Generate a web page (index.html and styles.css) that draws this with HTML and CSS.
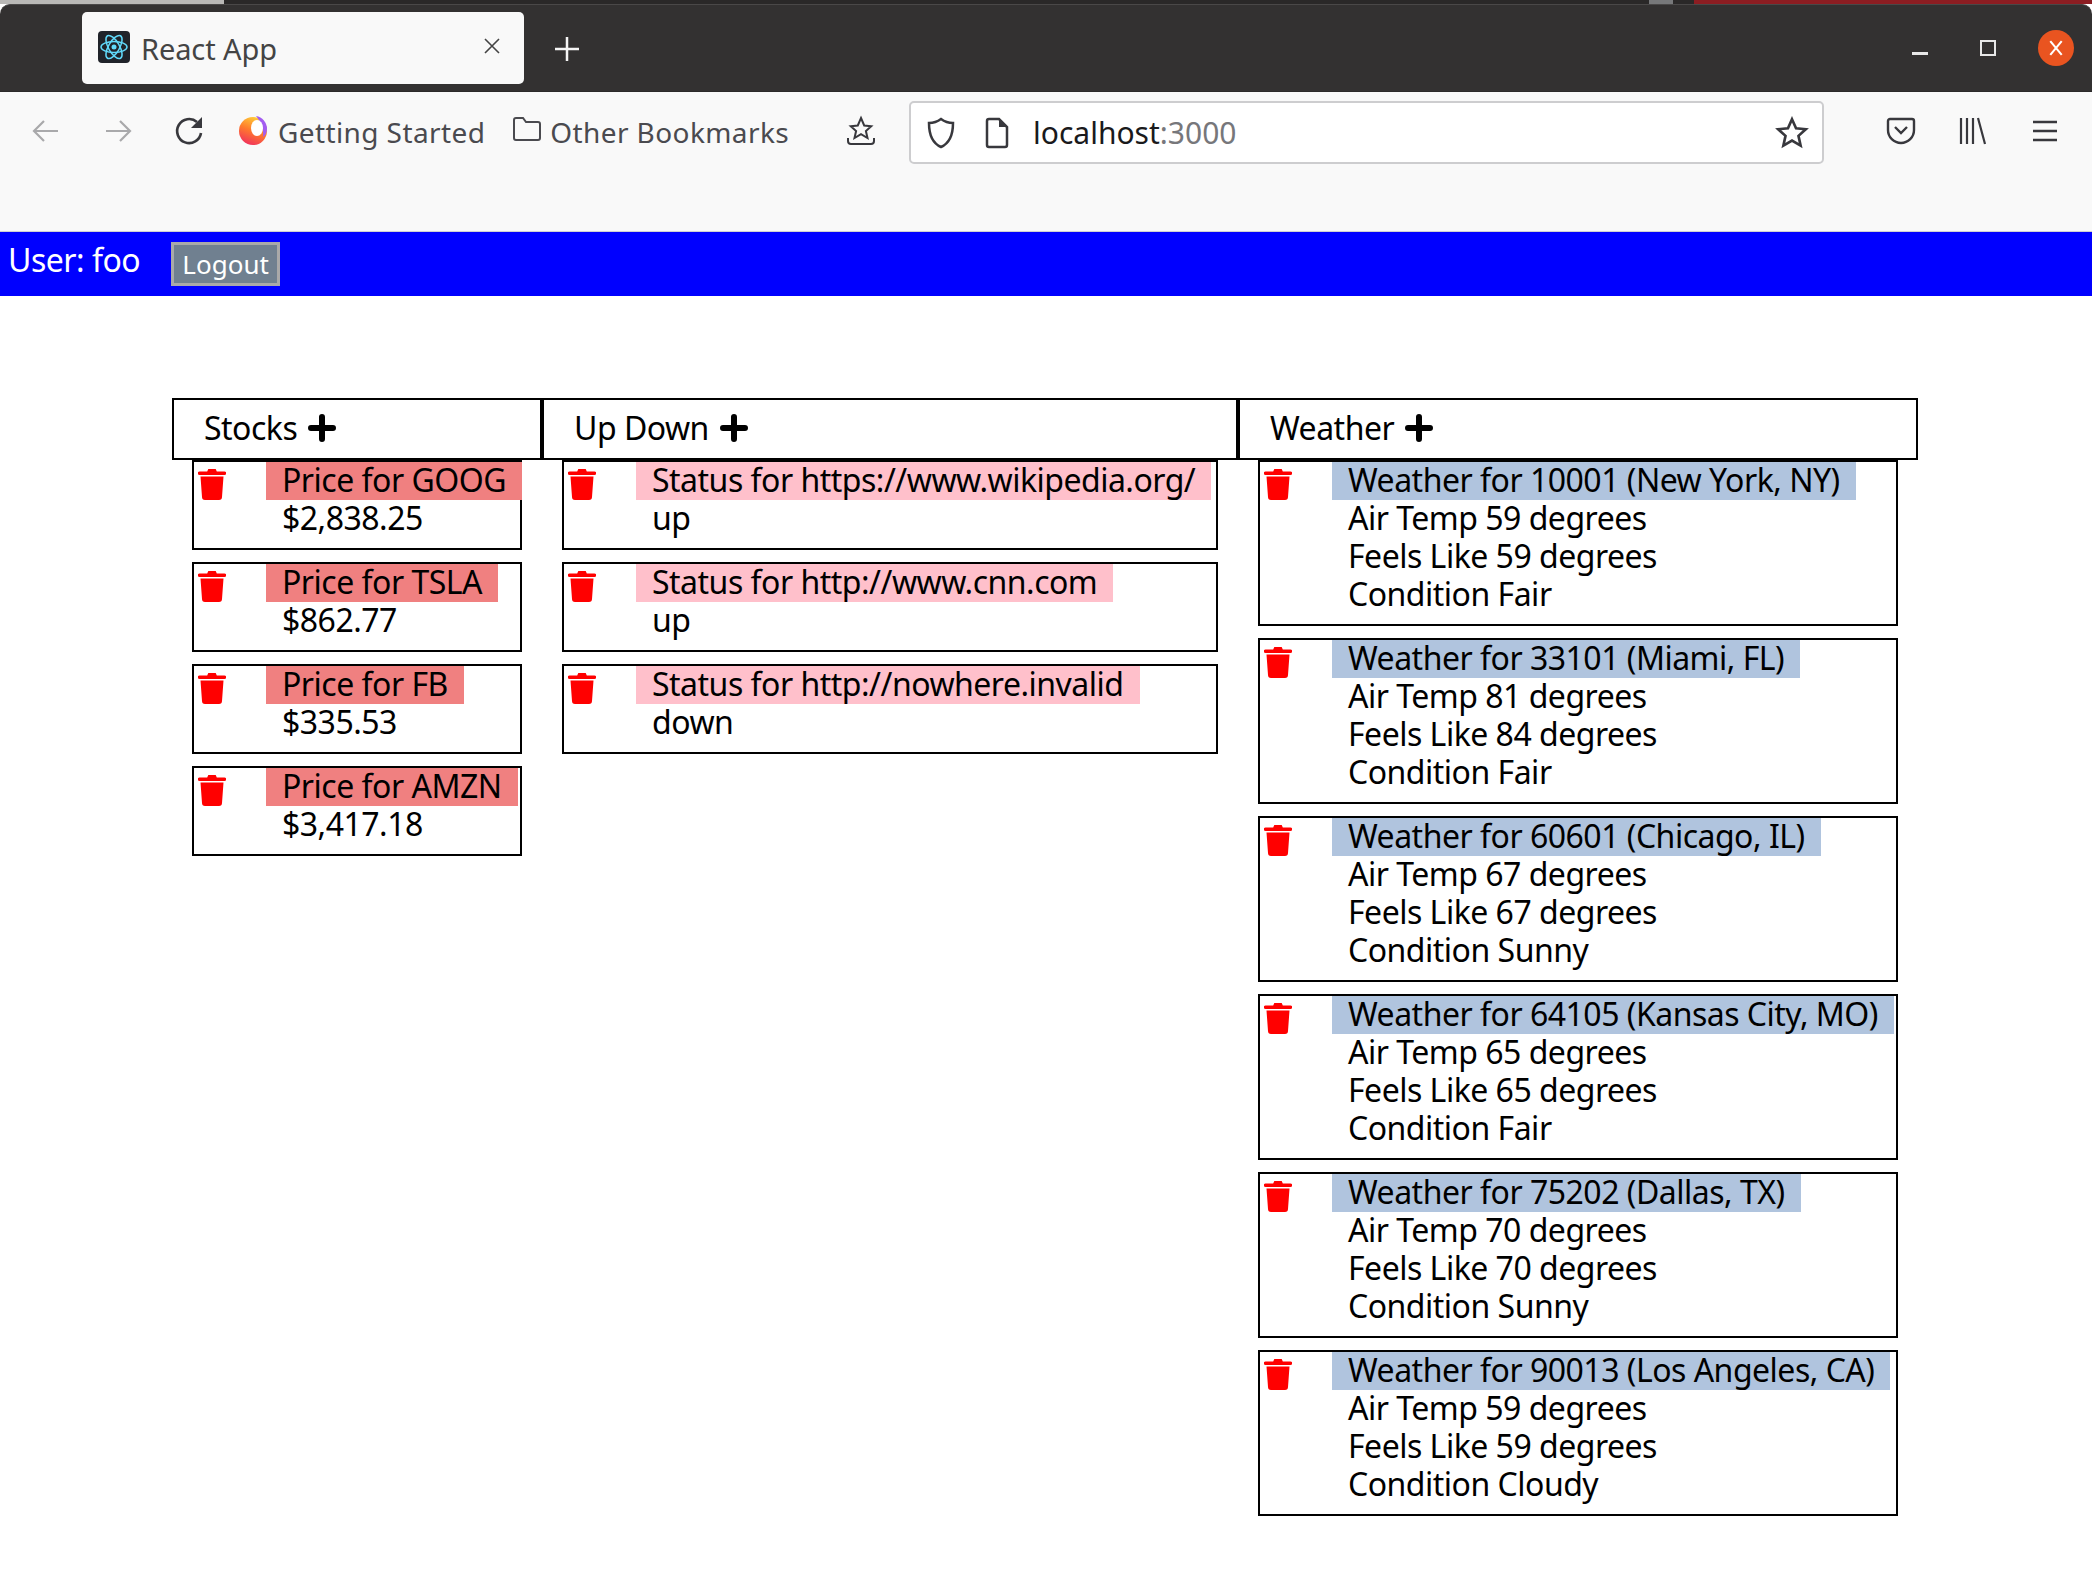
FILE: index.html
```html
<!DOCTYPE html>
<html lang="en">
<head>
  <meta charset="UTF-8">
  <title>React App</title>
  <link rel="stylesheet" href="styles.css">
</head>
<body>
  <svg class="defs" width="0" height="0">
    <symbol id="trash" viewBox="0 0 28 32">
      <path d="M1.500 3.500h7.700L10.300 1h7.400l1.100 2.500h7.700a1.500 1.500 0 0 1 0 3.500h-25a1.500 1.500 0 0 1 0-3.500zM2.500 8.500h23L24 29a3 3 0 0 1-3 3H7a3 3 0 0 1-3-3z"/>
    </symbol>
    <symbol id="plus" viewBox="0 0 28 28">
      <path d="M14 3v22M3 14h22" fill="none" stroke="currentColor" stroke-width="6" stroke-linecap="round"/>
    </symbol>
  </svg>

  <div class="top-strip">
    <div class="strip-left"></div>
    <div class="strip-knob"></div>
    <div class="strip-red"></div>
  </div>

  <header class="tabbar">
    <div class="tab">
      <svg class="favicon" viewBox="0 0 32 32">
        <rect width="32" height="32" rx="4" fill="#20232a"/>
        <g fill="none" stroke="#61dafb" stroke-width="1.500">
          <ellipse cx="16" cy="16" rx="13" ry="5.500"/>
          <ellipse cx="16" cy="16" rx="13" ry="5.500" transform="rotate(60 16 16)"/>
          <ellipse cx="16" cy="16" rx="13" ry="5.500" transform="rotate(120 16 16)"/>
        </g>
        <circle cx="16" cy="16" r="2.500" fill="#61dafb"/>
      </svg>
      <span class="tab-title">React App</span>
      <svg class="tab-close" viewBox="0 0 16 16"><path d="M1 1l14 14M15 1L1 15" stroke="#444" stroke-width="1.600"/></svg>
    </div>
    <svg class="new-tab" viewBox="0 0 24 24"><path d="M12 0v24M0 12h24" stroke="#f5f5f5" stroke-width="2.500"/></svg>
    <div class="window-controls">
      <span class="win-min"></span>
      <span class="win-max"></span>
      <span class="win-close">
        <svg viewBox="0 0 14 14"><path d="M2 1l10 12M12 1L2 13" stroke="#fff" stroke-width="1.800"/></svg>
      </span>
    </div>
  </header>

  <div class="toolbar">
    <svg class="tool-icon back" viewBox="0 0 32 32"><path d="M28 16H5M14 6L4 16l10 10" fill="none" stroke="#a9a9ab" stroke-width="2.200"/></svg>
    <svg class="tool-icon forward" viewBox="0 0 32 32"><path d="M4 16h23M18 6l10 10-10 10" fill="none" stroke="#a9a9ab" stroke-width="2.200"/></svg>
    <svg class="tool-icon reload" viewBox="0 0 32 32"><path d="M27 18a12 12 0 1 1-4-11" fill="none" stroke="#38383d" stroke-width="2.600"/><path d="M28 2v11H17z" fill="#38383d"/></svg>
    <svg class="firefox" viewBox="0 0 32 32">
      <defs>
        <linearGradient id="fx" x1="0.700" y1="0" x2="0.300" y2="1">
          <stop offset="0" stop-color="#ffd43a"/>
          <stop offset="0.500" stop-color="#ff7a2c"/>
          <stop offset="1" stop-color="#f0305e"/>
        </linearGradient>
      </defs>
      <circle cx="16" cy="16" r="14" fill="url(#fx)"/>
      <path d="M19 1a13 13 0 0 1 11 13c0 4-2 7-4 8 1-6-1-14-7-21z" fill="#a35cf0"/>
      <ellipse cx="20" cy="13" rx="6" ry="8" fill="#fff"/>
    </svg>
    <span class="bookmark">Getting Started</span>
    <svg class="folder" viewBox="0 0 30 28"><path d="M2 5a2 2 0 0 1 2-2h7l3 4h12a2 2 0 0 1 2 2v14a2 2 0 0 1-2 2H4a2 2 0 0 1-2-2z" fill="none" stroke="#4a4a4f" stroke-width="2"/></svg>
    <span class="bookmark other">Other Bookmarks</span>
    <svg class="tool-icon shelf" viewBox="0 0 32 32"><path d="M16 3l3.200 7.500 7 .7-5.300 4.800 1.600 7-6.500-3.800-6.500 3.800 1.600-7-5.300-4.800 7-.7z" fill="none" stroke="#38383d" stroke-width="2"/><path d="M3 23v3a3 3 0 0 0 3 3h20a3 3 0 0 0 3-3v-3" fill="none" stroke="#38383d" stroke-width="2"/></svg>
    <div class="urlbar">
      <svg class="url-icon" viewBox="0 0 32 32"><path d="M16 2c4 3 8 4 12 4 0 12-3 20-12 24C7 26 4 18 4 6c4 0 8-1 12-4z" fill="none" stroke="#38383d" stroke-width="2.500"/></svg>
      <svg class="url-icon page" viewBox="0 0 32 32"><path d="M6 4a2 2 0 0 1 2-2h10l8 8v18a2 2 0 0 1-2 2H8a2 2 0 0 1-2-2z" fill="none" stroke="#38383d" stroke-width="2.500"/><path d="M18 2v8h8z" fill="#38383d"/></svg>
      <span class="url-text">localhost<span class="url-port">:3000</span></span>
      <svg class="url-star" viewBox="0 0 32 32"><path d="M16 3l3.800 8.500 9.200 1-6.900 6.200 2 9.100-8.100-4.700-8.100 4.700 2-9.100L3 12.500l9.200-1z" fill="none" stroke="#38383d" stroke-width="2.500"/></svg>
    </div>
    <svg class="tool-icon pocket" viewBox="0 0 32 32"><path d="M3 6a2 2 0 0 1 2-2h22a2 2 0 0 1 2 2v9a13 13 0 0 1-26 0z" fill="none" stroke="#38383d" stroke-width="2.400"/><path d="M10 12l6 6 6-6" fill="none" stroke="#38383d" stroke-width="2.400"/></svg>
    <svg class="tool-icon library" viewBox="0 0 32 32"><path d="M4 3v26M10 3v26M16 3v26M21 3l7 26" fill="none" stroke="#38383d" stroke-width="2.200"/></svg>
    <svg class="tool-icon menu" viewBox="0 0 32 32"><path d="M4 7h24M4 16h24M4 25h24" fill="none" stroke="#38383d" stroke-width="2.600"/></svg>
  </div>

  <nav class="userbar">
    <span class="user-name">User: foo</span>
    <button class="logout" type="button">Logout</button>
  </nav>

  <main class="board">
    <section class="column col-stocks">
      <h2 class="column-head">Stocks <svg class="add"><use href="#plus"/></svg></h2>
      <div class="card">
        <svg class="trash"><use href="#trash"/></svg>
        <div class="card-body">
          <div class="title stock">Price for GOOG</div>
          <div>$2,838.25</div>
        </div>
      </div>
      <div class="card">
        <svg class="trash"><use href="#trash"/></svg>
        <div class="card-body">
          <div class="title stock">Price for TSLA</div>
          <div>$862.77</div>
        </div>
      </div>
      <div class="card">
        <svg class="trash"><use href="#trash"/></svg>
        <div class="card-body">
          <div class="title stock">Price for FB</div>
          <div>$335.53</div>
        </div>
      </div>
      <div class="card">
        <svg class="trash"><use href="#trash"/></svg>
        <div class="card-body">
          <div class="title stock">Price for AMZN</div>
          <div>$3,417.18</div>
        </div>
      </div>
    </section>

    <section class="column col-updown">
      <h2 class="column-head">Up Down <svg class="add"><use href="#plus"/></svg></h2>
      <div class="card">
        <svg class="trash"><use href="#trash"/></svg>
        <div class="card-body">
          <div class="title status">Status for https://www.wikipedia.org/</div>
          <div>up</div>
        </div>
      </div>
      <div class="card">
        <svg class="trash"><use href="#trash"/></svg>
        <div class="card-body">
          <div class="title status">Status for http://www.cnn.com</div>
          <div>up</div>
        </div>
      </div>
      <div class="card">
        <svg class="trash"><use href="#trash"/></svg>
        <div class="card-body">
          <div class="title status">Status for http://nowhere.invalid</div>
          <div>down</div>
        </div>
      </div>
    </section>

    <section class="column col-weather">
      <h2 class="column-head">Weather <svg class="add"><use href="#plus"/></svg></h2>
      <div class="card">
        <svg class="trash"><use href="#trash"/></svg>
        <div class="card-body">
          <div class="title weather">Weather for 10001 (New York, NY)</div>
          <div>Air Temp 59 degrees</div>
          <div>Feels Like 59 degrees</div>
          <div>Condition Fair</div>
        </div>
      </div>
      <div class="card">
        <svg class="trash"><use href="#trash"/></svg>
        <div class="card-body">
          <div class="title weather">Weather for 33101 (Miami, FL)</div>
          <div>Air Temp 81 degrees</div>
          <div>Feels Like 84 degrees</div>
          <div>Condition Fair</div>
        </div>
      </div>
      <div class="card">
        <svg class="trash"><use href="#trash"/></svg>
        <div class="card-body">
          <div class="title weather">Weather for 60601 (Chicago, IL)</div>
          <div>Air Temp 67 degrees</div>
          <div>Feels Like 67 degrees</div>
          <div>Condition Sunny</div>
        </div>
      </div>
      <div class="card">
        <svg class="trash"><use href="#trash"/></svg>
        <div class="card-body">
          <div class="title weather">Weather for 64105 (Kansas City, MO)</div>
          <div>Air Temp 65 degrees</div>
          <div>Feels Like 65 degrees</div>
          <div>Condition Fair</div>
        </div>
      </div>
      <div class="card">
        <svg class="trash"><use href="#trash"/></svg>
        <div class="card-body">
          <div class="title weather">Weather for 75202 (Dallas, TX)</div>
          <div>Air Temp 70 degrees</div>
          <div>Feels Like 70 degrees</div>
          <div>Condition Sunny</div>
        </div>
      </div>
      <div class="card">
        <svg class="trash"><use href="#trash"/></svg>
        <div class="card-body">
          <div class="title weather">Weather for 90013 (Los Angeles, CA)</div>
          <div>Air Temp 59 degrees</div>
          <div>Feels Like 59 degrees</div>
          <div>Condition Cloudy</div>
        </div>
      </div>
    </section>
  </main>
</body>
</html>
```

FILE: styles.css
```css
html, body {
  margin: 0;
  padding: 0;
}

body {
  font-family: "Noto Sans", sans-serif;
  background: #fff;
  color: #000;
  overflow: hidden;
}

.defs {
  display: block;
  height: 0;
}

/* strip of the window behind */
.top-strip {
  display: flex;
  height: 4px;
  background: #2a2828;
}

.strip-left {
  width: 224px;
  background: #b9b8b6;
}

.strip-knob {
  width: 24px;
  margin-left: 1425px;
  background: #77787a;
}

.strip-red {
  flex: 1;
  margin-left: 21px;
  background: #8c1d22;
}

.tabbar {
  display: flex;
  align-items: flex-start;
  height: 87px;
  padding-top: 7px;
  box-sizing: border-box;
  background: #333131;
  border-radius: 10px 10px 0 0;
  border-top: 1px solid #4a4848;
}

.tab {
  display: flex;
  align-items: center;
  width: 442px;
  height: 72px;
  margin-left: 82px;
  padding: 0 16px;
  box-sizing: border-box;
  background: #f9f9f9;
  border-radius: 5px;
}

.favicon {
  flex: none;
  width: 32px;
  height: 32px;
  margin-bottom: 2px;
}

.tab-title {
  margin-left: 11px;
  font-size: 29px;
  letter-spacing: -0.1px;
  color: #444;
}

.tab-close {
  width: 16px;
  height: 16px;
  margin-left: auto;
  margin-right: 8px;
  margin-bottom: 4px;
}

.new-tab {
  width: 24px;
  height: 24px;
  margin: 25px 0 0 31px;
}

.window-controls {
  display: flex;
  align-items: center;
  margin-left: auto;
  height: 72px;
}

.win-min {
  width: 16px;
  height: 3px;
  margin-top: 10px;
  background: #e8e8e8;
}

.win-max {
  width: 16px;
  height: 16px;
  margin-left: 52px;
  border: 2px solid #e8e8e8;
  box-sizing: border-box;
}

.win-close {
  display: flex;
  align-items: center;
  justify-content: center;
  width: 36px;
  height: 36px;
  margin: 0 18px 0 42px;
  background: #e95420;
  border-radius: 50%;
}

.win-close svg {
  width: 16px;
  height: 18px;
}

.toolbar {
  display: flex;
  align-items: flex-start;
  height: 141px;
  padding-top: 9px;
  box-sizing: border-box;
  background: #f9f9f9;
  border-top: 1px solid #2b2a2a;
  border-bottom: 1px solid #cfcfd1;
}

.tool-icon {
  flex: none;
  width: 32px;
  height: 32px;
  margin-top: 14px;
}

.back { margin-left: 30px; }
.forward { margin-left: 40px; }
.reload { margin-left: 40px; }

.firefox {
  flex: none;
  width: 32px;
  height: 32px;
  margin: 14px 0 0 31px;
}

.bookmark {
  margin: 14px 0 0 9px;
  font-size: 28px;
  line-height: 34px;
  letter-spacing: 0.4px;
  color: #4a4a4f;
  white-space: nowrap;
}

.folder {
  flex: none;
  width: 30px;
  height: 28px;
  margin: 14px 0 0 27px;
}

.other { margin-left: 8px; }

.shelf { margin-left: 56px; }

.urlbar {
  display: flex;
  align-items: center;
  flex: none;
  width: 915px;
  height: 63px;
  margin-left: 32px;
  box-sizing: border-box;
  background: #fff;
  border: 2px solid #cdcdcf;
  border-radius: 5px;
}

.url-icon {
  width: 32px;
  height: 32px;
  margin-left: 14px;
}

.url-icon.page {
  margin-left: 24px;
}

.url-text {
  margin-left: 20px;
  font-size: 30px;
  color: #1a1a1c;
}

.url-port {
  color: #77777b;
}

.url-star {
  width: 34px;
  height: 34px;
  margin-left: auto;
  margin-right: 13px;
}

.pocket { margin-left: 61px; }
.library { margin-left: 40px; }
.menu { margin-left: 40px; }

.userbar {
  display: flex;
  align-items: center;
  height: 64px;
  padding-left: 8px;
  box-sizing: border-box;
  background: #00f;
  color: #fff;
}

.user-name {
  font-size: 32px;
  line-height: 38px;
  letter-spacing: -0.5px;
  margin-bottom: 8px;
}

.logout {
  width: 109px;
  height: 44px;
  margin: 0 0 0 31px;
  padding: 0;
  font-family: inherit;
  font-size: 26px;
  color: #fff;
  background: #708090;
  border: 3px solid #a9a9a9;
}

.board {
  display: flex;
  align-items: flex-start;
  margin: 102px 0 0 172px;
}

.column {
  flex: none;
}

.col-stocks { width: 370px; }
.col-updown { width: 696px; }
.col-weather { width: 680px; }

.column-head {
  display: flex;
  align-items: center;
  gap: 11px;
  height: 62px;
  margin: 0;
  padding: 0 0 4px 30px;
  box-sizing: border-box;
  border: 2px solid #000;
  font-size: 32px;
  font-weight: normal;
  letter-spacing: -0.5px;
}

.add {
  width: 28px;
  height: 28px;
  margin-top: 2px;
}

.card {
  display: flex;
  margin: 0 20px 12px;
  border: 2px solid #000;
  box-sizing: border-box;
  font-size: 32px;
  letter-spacing: -0.5px;
  padding-bottom: 10px;
}

.trash {
  flex: none;
  width: 28px;
  height: 32px;
  margin: 6px 0 0 4px;
  fill: #f00;
}

.card-body {
  margin-left: 40px;
  white-space: nowrap;
}

.card-body > div {
  padding: 0 0 2px 16px;
  line-height: 36px;
}

.card-body > .title {
  width: fit-content;
  padding-right: 16px;
}

.stock { background: #f08080; }
.status { background: #ffc0cb; }
.weather { background: #b0c4de; }
```
